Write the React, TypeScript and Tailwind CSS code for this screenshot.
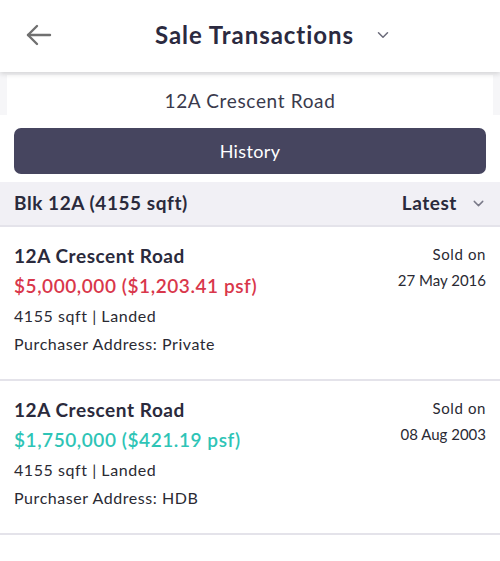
import { ChevronDown } from "lucide-react";

const font = { fontFamily: "Lato, 'Noto Sans', sans-serif" };

type Sale = {
  name: string;
  price: string;
  psf: string;
  color: string;
  detail: string;
  purchaser: string;
  date: string;
};

const sales: Sale[] = [
  {
    name: "12A Crescent Road",
    price: "$5,000,000",
    psf: "($1,203.41 psf)",
    color: "text-[#d9374b]",
    detail: "4155 sqft | Landed",
    purchaser: "Purchaser Address: Private",
    date: "27 May 2016",
  },
  {
    name: "12A Crescent Road",
    price: "$1,750,000",
    psf: "($421.19 psf)",
    color: "text-[#2ec4b6]",
    detail: "4155 sqft | Landed",
    purchaser: "Purchaser Address: HDB",
    date: "08 Aug 2003",
  },
];

function BackArrow() {
  return (
    <svg width="26" height="22" viewBox="0 0 26 22" fill="none" stroke="#707070" strokeWidth="2.4" strokeLinecap="round" strokeLinejoin="round">
      <path d="M24 11H2" />
      <path d="M11 2L2 11l9 9" />
    </svg>
  );
}

function SaleCard({ s }: { s: Sale }) {
  return (
    <div className="flex justify-between border-b-2 border-[#e4e3ea] bg-white px-[14px] pt-[16px] pb-[24px]">
      <div className="flex flex-col tracking-[0.035em]">
        <div className="text-[19px] font-bold leading-[26px] text-[#2a2a3c]">{s.name}</div>
        <div className={`mt-[4px] text-[19px] font-semibold leading-[26px] ${s.color}`}>
          {s.price} {s.psf}
        </div>
        <div className="mt-[6px] text-[16px] leading-[22px] text-[#2a2a33]">{s.detail}</div>
        <div className="mt-[6px] text-[16px] leading-[22px] text-[#2a2a33]">{s.purchaser}</div>
      </div>
      <div className="flex flex-col items-end pt-[1px] text-[15px] leading-[20px] text-[#2a2a33]">
        <div className="tracking-[0.04em]">Sold on</div>
        <div className="mt-[6px]">{s.date}</div>
      </div>
    </div>
  );
}

export default function App() {
  return (
    <div className="min-h-[561px] w-[500px] bg-white" style={font}>
      <div className="relative z-10 flex h-[72px] items-center bg-white pb-[3px] shadow-[0_2px_5px_rgba(0,0,0,0.14)]">
        <div className="flex w-[78px] justify-center pt-[1px]">
          <BackArrow />
        </div>
        <div className="flex items-center gap-[20px] pl-[77px]">
          <span className="text-[24px] font-bold tracking-[0.04em] text-[#2b2a40]">Sale Transactions</span>
          <ChevronDown className="h-[18px] w-[18px] text-[#6b6b7a]" strokeWidth={2} />
        </div>
      </div>
      <div className="bg-[#f6f6f8] px-[7px] pt-[3px]">
        <div className="flex h-[40px] items-end justify-center bg-white text-[19px] tracking-[0.035em] text-[#3a3a4c]">
          12A Crescent Road
        </div>
      </div>
      <div className="bg-white px-[14px] pt-[13px] pb-[8px]">
        <div className="flex h-[46px] items-center justify-center rounded-[7px] bg-[#46455f] text-[18px] tracking-[0.02em] text-white">
          History
        </div>
      </div>
      <div className="flex h-[45px] items-center justify-between border-b-2 border-[#e4e3ea] bg-[#f1f0f5] pr-[13px] pl-[14px] tracking-[0.035em]">
        <span className="text-[19px] font-bold text-[#2a2a3c]">Blk 12A (4155 sqft)</span>
        <div className="flex items-center gap-[13px]">
          <span className="text-[19px] font-bold text-[#2a2a3c]">Latest</span>
          <ChevronDown className="h-[17px] w-[17px] text-[#7a7a88]" strokeWidth={2} />
        </div>
      </div>
      {sales.map((s, i) => (
        <SaleCard key={i} s={s} />
      ))}
    </div>
  );
}
